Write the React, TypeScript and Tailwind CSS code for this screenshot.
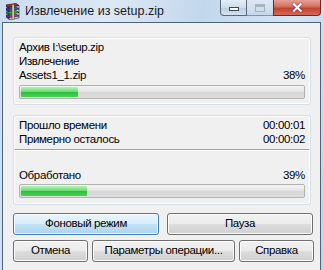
import React from 'react'

function RarIcon() {
  return (
    <svg width="17" height="17" viewBox="0 0 17 17" className="shrink-0">
      <path d="M2 2 L12 0.5 L15 2.5 L5 4 Z" fill="#c0204a" stroke="#3a0a18" strokeWidth="0.7" />
      <path d="M2 2 L5 4 L5 6 L2 4 Z" fill="#7a1030" />
      <path d="M2 5.5 L12 4 L15 6 L5 7.5 Z" fill="#2f56c8" stroke="#0a1a48" strokeWidth="0.7" />
      <path d="M2 5.5 L5 7.5 L5 9.5 L2 7.5 Z" fill="#1a2f80" />
      <path d="M2 9 L12 7.5 L15 9.5 L5 11 Z" fill="#2fb84a" stroke="#0a3a12" strokeWidth="0.7" />
      <path d="M2 9 L5 11 L5 13 L2 11 Z" fill="#157a28" />
      <path d="M2 12.5 L12 11 L15 13 L5 14.5 Z" fill="#9a3cc0" stroke="#300a40" strokeWidth="0.7" />
      <path d="M2 12.5 L5 14.5 L5 16.5 L2 14.5 Z" fill="#5a1a78" />
      <path d="M5 4 L15 2.5 L15 15 L5 16.5 Z" fill="none" stroke="#1a1a1a" strokeWidth="0.6" />
      <rect x="8" y="1.5" width="2.2" height="15" fill="#d8c890" stroke="#5a4a20" strokeWidth="0.5" />
    </svg>
  )
}

function Bar({ fill }: { fill: number }) {
  return (
    <div className="h-[14px] rounded-[2px] border border-[#b2b2b2] bg-[linear-gradient(#f4f4f4,#e6e6e6_45%,#d6d6d6_55%,#dedede)] p-[1px]">
      <div
        className="h-full rounded-[1px] bg-[linear-gradient(#b4f2b4,#6ddd74_45%,#2cc03a_55%,#4ccf57)]"
        style={{ width: fill }}
      />
    </div>
  )
}

function Btn({ children, w, primary }: { children: React.ReactNode; w: string; primary?: boolean }) {
  return (
    <div
      className={
        primary
          ? `${w} h-[22px] flex items-center justify-center rounded-[3px] border border-[#3c7fb1] bg-[linear-gradient(#e8f4fb,#d9eef9_48%,#c2e3f5_52%,#a9d4ee)] shadow-[inset_0_0_0_1px_#f8fcff]`
          : `${w} h-[22px] flex items-center justify-center rounded-[3px] border border-[#707070] bg-[linear-gradient(#f2f2f2,#ebebeb_48%,#dddddd_52%,#cfcfcf)] shadow-[inset_0_0_0_1px_#fcfcfc]`
      }
    >
      {children}
    </div>
  )
}

export default function App() {
  return (
    <div className="w-[324px] h-[270px] overflow-hidden relative bg-[linear-gradient(100deg,#c9dcef,#dbe8f5_30%,#c3d7ec_55%,#d5e4f3_80%,#bfd4ea)] font-['Liberation_Sans',Arial,sans-serif] text-[11.5px] tracking-[-0.35px] text-black">
      {/* title bar */}
      <div className="h-[22px] flex items-center pl-[4px] relative">
        <RarIcon />
        <span className="ml-[4px] text-[12.5px] tracking-normal text-[#1a1a1a]">Извлечение из setup.zip</span>
        <div className="absolute top-0 left-[220px] flex">
          <div className="w-[27px] h-[16px] rounded-bl-[4px] border border-t-0 border-[#56687c] bg-[linear-gradient(#e4edf7,#cddcec_50%,#b9cde2_55%,#d6e3f1)] flex items-center justify-center">
            <div className="w-[10px] h-[4px] mt-[3px] bg-white border border-[#39495a]" />
          </div>
          <div className="w-[26px] h-[16px] border-b border-[#7f95ab] bg-[linear-gradient(#dfe9f4,#d2dfed_50%,#c6d7e9)] flex items-center justify-center">
            <div className="w-[10px] h-[8px] border border-[#a4b4c6] shadow-[inset_0_2px_0_#a4b4c6]" />
          </div>
          <div className="w-[48px] h-[16px] rounded-br-[4px] border border-t-0 border-[#6a2a24] bg-[linear-gradient(#e6a196,#d3705f_45%,#c4402c_55%,#d76a55)] flex items-center justify-center">
            <span className="text-white font-bold text-[15px] leading-none [text-shadow:0_0_1px_#3a1410,0_0_1px_#3a1410]">✕</span>
          </div>
        </div>
      </div>

      {/* client area */}
      <div className="ml-[2px] w-[319px] h-[260px] border border-[#4f6378] bg-[#f0f0f0] pl-[10px] pt-[14px]">
        <div className="w-[298px] h-[68px] rounded-[3px] border border-[#d5dfe5] shadow-[inset_0_0_0_1px_#fff] px-[5px] pt-[2px]">
          <div className="h-[14px] leading-[14px]">Архив I:\setup.zip</div>
          <div className="h-[14px] leading-[14px]">Извлечение</div>
          <div className="h-[14px] leading-[14px] flex justify-between">
            <span>Assets1_1.zip</span>
            <span>38%</span>
          </div>
          <div className="mt-[3px]">
            <Bar fill={57} />
          </div>
        </div>

        <div className="mt-[10px] w-[298px] h-[90px] rounded-[3px] border border-[#d5dfe5] shadow-[inset_0_0_0_1px_#fff] pt-[2px]">
          <div className="px-[5px]">
            <div className="h-[14px] leading-[14px] flex justify-between">
              <span>Прошло времени</span>
              <span>00:00:01</span>
            </div>
            <div className="h-[14px] leading-[14px] flex justify-between">
              <span>Примерно осталось</span>
              <span>00:00:02</span>
            </div>
          </div>
          <div className="mx-[1px] mt-[3px] h-[2px] border-t border-[#a0a0a0] border-b border-b-white" />
          <div className="px-[5px] pt-[17px]">
            <div className="h-[14px] leading-[14px] flex justify-between">
              <span>Обработано</span>
              <span>39%</span>
            </div>
            <div className="mt-[2px]">
              <Bar fill={66} />
            </div>
          </div>
        </div>

        <div className="mt-[8px] flex gap-[8px]">
          <Btn w="w-[146px]" primary>Фоновый режим</Btn>
          <Btn w="w-[146px]">Пауза</Btn>
        </div>
        <div className="mt-[5px] flex gap-[4px]">
          <Btn w="w-[75px]">Отмена</Btn>
          <Btn w="w-[143px]">Параметры операции...</Btn>
          <Btn w="w-[75px]">Справка</Btn>
        </div>
      </div>
    </div>
  )
}
